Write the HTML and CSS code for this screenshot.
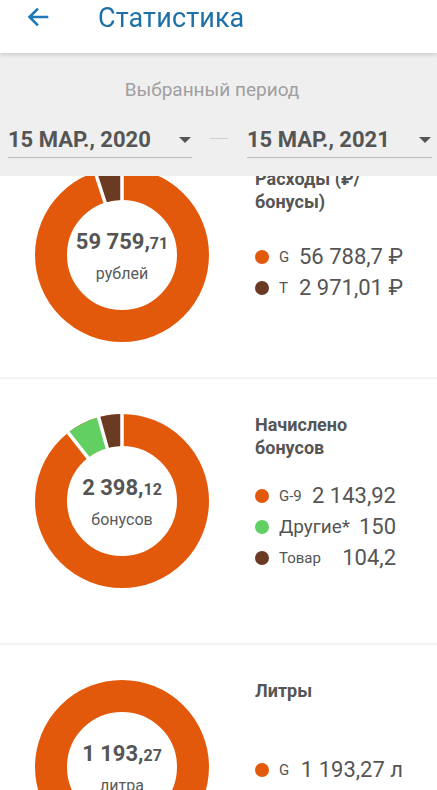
FILE: index.html
```html
<!DOCTYPE html>
<html lang="ru">
<head>
<meta charset="utf-8">
<title>Статистика</title>
<link rel="stylesheet" href="styles.css">
</head>
<body>
<div class="top">
  <header class="appbar">
    <svg class="back" viewBox="0 0 24 24" width="24" height="24"><path d="M21 12H4M11 4.5L3.5 12l7.5 7.5" fill="none" stroke="#1f78b8" stroke-width="2.6" stroke-linecap="square"/></svg>
    <h1 class="title">Статистика</h1>
  </header>
  <section class="period">
    <div class="period-label">Выбранный период</div>
    <div class="dates">
      <div class="date"><span>15 МАР., 2020</span><i class="caret"></i></div>
      <div class="dash"></div>
      <div class="date"><span>15 МАР., 2021</span><i class="caret"></i></div>
    </div>
  </section>
</div>

<main class="list">
  <article class="card card-1">
    <div class="donut">
      <svg viewBox="0 0 174 174" width="174" height="174">
        <circle cx="87" cy="87" r="71" class="ring orange"/>
        <circle cx="87" cy="87" r="71" class="ring brown" stroke-dasharray="22.2 446.1" stroke-dashoffset="-423.9" transform="rotate(-90 87 87)"/>
        <line x1="87" y1="36" x2="87" y2="-2" class="gap" transform="rotate(0 87 87)"/>
        <line x1="87" y1="36" x2="87" y2="-2" class="gap" transform="rotate(342.1 87 87)"/>
      </svg>
      <div class="center">
        <div class="total">59 759,<small>71</small></div>
        <div class="unit">рублей</div>
      </div>
    </div>
    <div class="info">
      <h2>Расходы (₽/<br>бонусы)</h2>
      <ul class="legend">
        <li class="row"><i class="dot orange-bg"></i><span class="lbl">G</span><span class="val">56 788,7 ₽</span></li>
        <li class="row"><i class="dot brown-bg"></i><span class="lbl">Т</span><span class="val">2 971,01 ₽</span></li>
      </ul>
    </div>
  </article>

  <article class="card card-2">
    <div class="donut">
      <svg viewBox="0 0 174 174" width="174" height="174">
        <circle cx="87" cy="87" r="71" class="ring orange"/>
        <circle cx="87" cy="87" r="71" class="ring green" stroke-dasharray="27.9 446.1" stroke-dashoffset="-398.8" transform="rotate(-90 87 87)"/>
        <circle cx="87" cy="87" r="71" class="ring brown" stroke-dasharray="19.4 446.1" stroke-dashoffset="-426.7" transform="rotate(-90 87 87)"/>
        <line x1="87" y1="36" x2="87" y2="-2" class="gap" transform="rotate(0 87 87)"/>
        <line x1="87" y1="36" x2="87" y2="-2" class="gap" transform="rotate(321.8 87 87)"/>
        <line x1="87" y1="36" x2="87" y2="-2" class="gap" transform="rotate(344.4 87 87)"/>
      </svg>
      <div class="center">
        <div class="total">2 398,<small>12</small></div>
        <div class="unit">бонусов</div>
      </div>
    </div>
    <div class="info">
      <h2>Начислено<br>бонусов</h2>
      <ul class="legend">
        <li class="row"><i class="dot orange-bg"></i><span class="lbl">G-9</span><span class="val">2 143,92</span></li>
        <li class="row"><i class="dot green-bg"></i><span class="lbl big">Другие*</span><span class="val">150</span></li>
        <li class="row"><i class="dot brown-bg"></i><span class="lbl">Товар</span><span class="val">104,2</span></li>
      </ul>
    </div>
  </article>

  <article class="card card-3">
    <div class="donut">
      <svg viewBox="0 0 174 174" width="174" height="174">
        <circle cx="87" cy="87" r="71" class="ring orange"/>
      </svg>
      <div class="center">
        <div class="total">1 193,<small>27</small></div>
        <div class="unit">литра</div>
      </div>
    </div>
    <div class="info">
      <h2>Литры</h2>
      <ul class="legend">
        <li class="row"><i class="dot orange-bg"></i><span class="lbl">G</span><span class="val">1 193,27 л</span></li>
      </ul>
    </div>
  </article>
</main>
</body>
</html>
```
FILE: styles.css
```css
html, body {
  margin: 0;
  padding: 0;
  background: #ffffff;
  font-family: Roboto, "Noto Sans", "Liberation Sans", sans-serif;
  color: #555555;
}

.top {
  position: fixed;
  top: 0;
  left: 0;
  right: 0;
  z-index: 10;
}

.appbar {
  height: 53px;
  background: #ffffff;
  display: flex;
  align-items: center;
  box-shadow: 0 2px 4px rgba(0, 0, 0, 0.14);
  position: relative;
  z-index: 2;
}

.back {
  margin-left: 26px;
  margin-top: -20px;
}

.title {
  margin: -18px 0 0 48px;
  font-size: 27px;
  font-weight: 400;
  color: #1e70a8;
  letter-spacing: 0.1px;
}

.period {
  background: #efefef;
  height: 123px;
  box-sizing: border-box;
  padding-top: 25px;
}

.period-label {
  text-align: center;
  padding-right: 13px;
  font-size: 19px;
  color: #a0a0a0;
  line-height: 24px;
}

.dates {
  display: flex;
  align-items: center;
  padding: 0 5px 0 8px;
  margin-top: 16px;
}

.date {
  width: 184px;
  height: 40px;
  box-sizing: border-box;
  padding-top: 4px;
  border-bottom: 1px solid #bdbdbd;
  display: flex;
  align-items: center;
  justify-content: space-between;
  font-size: 22px;
  font-weight: 700;
  color: #555555;
}

.date + .dash + .date {
  width: 185px;
}

.caret {
  width: 0;
  height: 0;
  border-left: 6px solid transparent;
  border-right: 6px solid transparent;
  border-top: 6px solid #555555;
  margin-right: 1px;
}

.dash {
  width: 18px;
  height: 1px;
  background: #cfcfcf;
  margin: 0 19px 0 18px;
}

.list {
  padding-top: 133px;
}

.card {
  display: flex;
  border-bottom: 2px solid #f3f3f3;
  padding: 35px 0 35px 35px;
}

.card-2 {
  padding-bottom: 55px;
}

.donut {
  position: relative;
  width: 174px;
  height: 174px;
  flex: none;
}

.donut svg {
  display: block;
  overflow: visible;
}

.ring {
  fill: none;
  stroke-width: 32;
}

.orange { stroke: #e3590c; }
.brown { stroke: #6b3a23; }
.green { stroke: #62cf62; }

.gap {
  stroke: #ffffff;
  stroke-width: 3.5;
}

.center {
  position: absolute;
  left: 0;
  right: 0;
  top: 60px;
  text-align: center;
}

.total {
  font-size: 22px;
  font-weight: 700;
  color: #555555;
  line-height: 28px;
}

.total small {
  font-size: 16px;
}

.unit {
  margin-top: 6px;
  font-size: 16px;
  color: #5a5a5a;
  line-height: 20px;
}

.info {
  margin-left: 46px;
  margin-top: -1px;
}

.info h2 {
  margin: 0;
  font-size: 18px;
  font-weight: 700;
  line-height: 23px;
  color: #555555;
}

.legend {
  list-style: none;
  margin: 0;
  padding: 0;
  width: 148px;
}

.card-1 .legend { margin-top: 28px; }
.card-2 .legend { margin-top: 21px; width: 141px; }
.card-3 .legend { margin-top: 52px; }

.row {
  display: flex;
  align-items: center;
  height: 31px;
}

.dot {
  flex: none;
  width: 14px;
  height: 14px;
  border-radius: 50%;
}

.orange-bg { background: #e3590c; }
.brown-bg { background: #6b3a23; }
.green-bg { background: #62cf62; }

.lbl {
  margin-left: 10px;
  font-size: 15px;
  color: #555555;
  white-space: nowrap;
}

.lbl.big {
  font-size: 19px;
}

.val {
  margin-left: auto;
  padding-left: 6px;
  font-size: 22px;
  color: #555555;
  white-space: nowrap;
}
```
